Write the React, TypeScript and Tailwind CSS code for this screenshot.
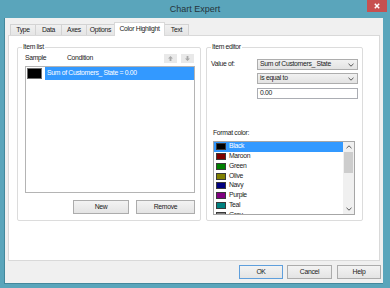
import React from "react";

const COLORS: [string, string][] = [
  ["Black", "#000000"],
  ["Maroon", "#800000"],
  ["Green", "#008000"],
  ["Olive", "#808000"],
  ["Navy", "#000080"],
  ["Purple", "#800080"],
  ["Teal", "#008080"],
  ["Gray", "#808080"],
];

const TABS: { label: string; w: string; active?: boolean }[] = [
  { label: "Type", w: "w-[26px]" },
  { label: "Data", w: "w-[27px]" },
  { label: "Axes", w: "w-[26px]" },
  { label: "Options", w: "w-[29px]" },
  { label: "Color Highlight", w: "w-[51px]", active: true },
  { label: "Text", w: "w-[25px]" },
];

function Chevron({ dir = "down" }: { dir?: "up" | "down" }) {
  return (
    <svg width="6" height="4" viewBox="0 0 6 4">
      <path
        d={dir === "down" ? "M0.5 0.8 L3 3.2 L5.5 0.8" : "M0.5 3.2 L3 0.8 L5.5 3.2"}
        fill="none"
        stroke="#555"
        strokeWidth="1"
      />
    </svg>
  );
}

function ArrowBtn({ dir }: { dir: "up" | "down" }) {
  return (
    <div className="w-[13px] h-[9px] bg-[#e9e9e9] flex items-center justify-center">
      <svg width="5" height="5" viewBox="0 0 5 5">
        {dir === "up" ? (
          <path d="M2.5 0 L5 2.5 L3.4 2.5 L3.4 5 L1.6 5 L1.6 2.5 L0 2.5 Z" fill="#a8a8a8" />
        ) : (
          <path d="M2.5 5 L5 2.5 L3.4 2.5 L3.4 0 L1.6 0 L1.6 2.5 L0 2.5 Z" fill="#a8a8a8" />
        )}
      </svg>
    </div>
  );
}

function Button({ label, w, focused }: { label: string; w: string; focused?: boolean }) {
  return (
    <div
      className={`${w} h-[14px] flex items-center justify-center leading-none bg-gradient-to-b from-[#f3f3f3] to-[#e4e4e4] border ${
        focused ? "border-[#5f9fdc]" : "border-[#acacac]"
      } text-[#1a1a1a]`}
    >
      {label}
    </div>
  );
}

function Combo({ text }: { text: string }) {
  return (
    <div className="h-[11px] flex items-center justify-between bg-gradient-to-b from-[#f1f1f1] to-[#e3e3e3] border border-[#adadad] pl-[2px] pr-[3px] leading-none">
      <span>{text}</span>
      <Chevron />
    </div>
  );
}

export default function App() {
  return (
    <div className="w-[390px] h-[288px] bg-[#5aa5bb] flex flex-col overflow-hidden font-['Liberation_Sans',Arial,sans-serif] text-[6.8px] tracking-[-0.3px] text-[#1a1a1a]">
      {/* Title bar */}
      <div className="h-[18px] grid grid-cols-[1fr_auto_1fr]">
        <div />
        <div className="text-[9px] tracking-normal leading-[18px] text-[#26343a]">Chart Expert</div>
        <div className="flex justify-end pr-[3px]">
          <div className="w-[20px] h-[12px] bg-[#c75050] flex items-center justify-center">
            <svg width="6" height="6" viewBox="0 0 6 6">
              <path d="M0.8 0.8 L5.2 5.2 M5.2 0.8 L0.8 5.2" stroke="#fff" strokeWidth="1.5" />
            </svg>
          </div>
        </div>
      </div>

      {/* Client area */}
      <div className="ml-[4px] mr-[7px] h-[266px] bg-[#f0f0f0] border-l border-b border-[#43889c] pt-[4px] pl-[3px] flex flex-col">
        {/* Tabs */}
        <div className="h-[14px] -mb-px relative z-10 flex items-end pl-[2px]">
          {TABS.map((t, i) => (
            <div
              key={t.label}
              className={`${t.w} ${i > 0 ? "-ml-px" : ""} flex items-center justify-center leading-none border-l border-t border-r ${
                t.active
                  ? "h-[14px] bg-white border-[#d9d9d9] relative z-10 pb-[1px]"
                  : "h-[11px] mb-px bg-gradient-to-b from-[#f0f0f0] to-[#e5e5e5] border-[#d3d3d3]"
              }`}
            >
              {t.label}
            </div>
          ))}
        </div>

        {/* Panel */}
        <div className="w-[372px] h-[226px] bg-white border border-[#d9d9d9] pl-[8px] pt-[11px] flex gap-[5px]">
          {/* Item list group */}
          <div className="relative w-[184px] h-[174px] border border-[#dcdcdc] rounded-[2px] pl-[7px] pr-[5px] pt-[6px] flex flex-col">
            <span className="absolute -top-[5px] left-[4px] bg-white px-[1px] leading-[8px]">Item list</span>
            <div className="h-[9px] flex items-center">
              <span className="w-[42px]">Sample</span>
              <span className="flex-1">Condition</span>
              <div className="flex gap-[4px] mr-[1px]">
                <ArrowBtn dir="up" />
                <ArrowBtn dir="down" />
              </div>
            </div>
            <div className="mt-[3px] h-[127px] border border-[#b4b4b4] bg-white">
              <div className="h-[13px] flex items-center">
                <div className="w-[16px] ml-[1px] flex items-center">
                  <div className="w-[15px] h-[11px] bg-black border border-[#6d6d6d]" />
                </div>
                <div className="ml-[2px] flex-1 h-[13px] bg-[#3399ff] text-white flex items-center pl-[2px] leading-none">
                  Sum of Customers_ State = 0.00
                </div>
              </div>
            </div>
            <div className="mt-[7px] flex justify-end gap-[7px]">
              <Button label="New" w="w-[56px]" />
              <Button label="Remove" w="w-[59px]" />
            </div>
          </div>

          {/* Item editor group */}
          <div className="relative w-[157px] h-[174px] border border-[#dcdcdc] rounded-[2px] pt-[11px] flex flex-col">
            <span className="absolute -top-[5px] left-[4px] bg-white px-[1px] leading-[8px]">Item editor</span>
            <div className="flex pl-[4px]">
              <div className="w-[46px] h-[11px] flex items-center leading-none">Value of:</div>
              <div className="w-[101px] flex flex-col">
                <Combo text="Sum of Customers_ State" />
                <div className="mt-[3px]">
                  <Combo text="is equal to" />
                </div>
                <div className="mt-[4px] h-[11px] border border-[#abadb3] bg-white flex items-center pl-[2px] leading-none">
                  0.00
                </div>
              </div>
            </div>
            <div className="pl-[6px] mt-[30px] leading-[8px]">Format color:</div>
            <div className="ml-[6px] mt-[4px] w-[142px] h-[74px] border border-[#a6a6a6] bg-white flex overflow-hidden">
              <div className="flex-1 flex flex-col overflow-hidden">
                {COLORS.map(([name, hex], i) => (
                  <div
                    key={name}
                    className={`h-[9.75px] shrink-0 flex items-center leading-none ${
                      i === 0 ? "bg-[#3399ff] text-white" : ""
                    }`}
                  >
                    <div
                      className="ml-[2px] w-[10px] h-[7px] border border-[#3a3a3a]"
                      style={{ backgroundColor: hex }}
                    />
                    <span className="ml-[3px]">{name}</span>
                  </div>
                ))}
              </div>
              <div className="w-[11px] bg-[#f0f0f0] flex flex-col">
                <div className="h-[10px] flex items-center justify-center">
                  <Chevron dir="up" />
                </div>
                <div className="h-[21px] mx-[1px] bg-[#cdcdcd]" />
                <div className="flex-1" />
                <div className="h-[10px] flex items-center justify-center">
                  <Chevron dir="down" />
                </div>
              </div>
            </div>
          </div>
        </div>

        {/* Dialog buttons */}
        <div className="mt-[4px] flex justify-end pr-[2px]">
          <Button label="OK" w="w-[44px]" focused />
          <div className="ml-[4px]">
            <Button label="Cancel" w="w-[45px]" />
          </div>
          <div className="ml-[5px]">
            <Button label="Help" w="w-[44px]" />
          </div>
        </div>
      </div>
    </div>
  );
}
